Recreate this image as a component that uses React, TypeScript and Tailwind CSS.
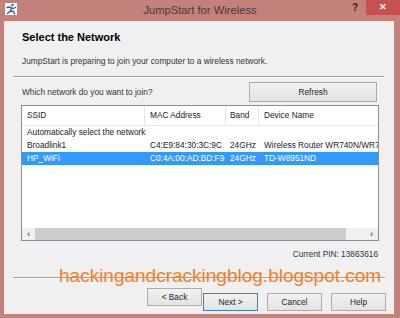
import React from "react";

const font = { fontFamily: '"Liberation Sans", Arial, sans-serif' };

function AppIcon() {
    return (
        <svg width="12" height="12" viewBox="0 0 12 12">
            <rect width="12" height="12" fill="#ffffff" />
            <circle cx="7.5" cy="2" r="1.2" fill="#1f5fbf" />
            <path d="M2 4.5 L5 4 L8 5.5 L10.5 4.5 M6.5 4.5 L5.5 8 L2.5 10.5 M5.5 8 L8.5 8.5 L9.5 11" stroke="#1f5fbf" strokeWidth="1.3" fill="none" strokeLinecap="round" strokeLinejoin="round" />
        </svg>
    );
}

function Button({ label, focused }: { label: string; focused?: boolean }) {
    return (
        <button
            className={
                focused
                    ? "w-[55px] h-[18px] border border-[#3c7fb1] bg-gradient-to-b from-[#f2f2f2] to-[#e3e3e3] text-[8.3px] text-[#222]"
                    : "w-[55px] h-[18px] border border-[#acacac] bg-gradient-to-b from-[#f2f2f2] to-[#e3e3e3] text-[8.3px] text-[#222]"
            }
        >
            {label}
        </button>
    );
}

export default function App() {
    const rows = [
        { ssid: "Broadlink1", mac: "C4:E9:84:30:3C:9C", band: "24GHz", name: "Wireless Router WR740N/WR74" },
        { ssid: "HP_WiFi", mac: "C0:4A:00:AD:BD:F9", band: "24GHz", name: "TD-W8951ND", selected: true },
    ];

    return (
        <div className="relative w-[400px] h-[318px] bg-[#c3817a] flex flex-col overflow-hidden" style={font}>
            {/* Title bar */}
            <div className="h-[21px] flex items-start relative">
                <div className="mt-[3px] ml-[5px]">
                    <AppIcon />
                </div>
                <div className="absolute left-0 right-0 top-[3px] text-center text-[11.2px] text-[#3d3d3d] leading-[14px]">
                    JumpStart for Wireless
                </div>
                <div className="ml-auto flex items-start">
                    <span className="mt-[2px] mr-[8px] text-[10px] font-bold text-[#2b2b2b] leading-[12px]">?</span>
                    <div className="w-[34px] h-[15px] bg-[#c75050] flex items-center justify-center text-white text-[9px] font-bold leading-none">
                        ✕
                    </div>
                </div>
            </div>

            {/* Content */}
            <div className="ml-[4px] mr-[6px] mb-[4px] flex-1 bg-[#f0f0f0] flex flex-col text-[#1e1e1e]">
                <div className="pl-[18px] pt-[9px] text-[11px] font-bold leading-[14px] text-black">Select the Network</div>
                <div className="pl-[18px] mt-[11px] text-[8.3px] leading-[12px] text-[#333]">
                    JumpStart is preparing to join your computer to a wireless network.
                </div>
                <div className="ml-[9px] mr-[10px] mt-[9px] border-t border-[#a0a0a0] border-b border-b-white" />

                <div className="mt-[4px] pl-[18px] pr-[17px] flex items-center justify-between">
                    <span className="text-[8.3px] text-[#333]">Which network do you want to join?</span>
                    <button className="w-[128px] h-[20px] border border-[#acacac] bg-gradient-to-b from-[#f2f2f2] to-[#e3e3e3] text-[8.3px] text-[#222]">
                        Refresh
                    </button>
                </div>

                {/* List */}
                <div className="mt-[3px] ml-[17px] w-[358px] h-[136px] border border-[#8a8f97] bg-white flex flex-col overflow-hidden text-[8.3px]">
                    <div className="h-[20px] flex border-b border-[#e3ecf5] text-[#222] shrink-0">
                        <div className="w-[123px] pl-[5px] flex items-center border-r border-[#e5e5e5]">SSID</div>
                        <div className="w-[81px] pl-[5px] flex items-center border-r border-[#e5e5e5]">MAC Address</div>
                        <div className="w-[33px] pl-[4px] flex items-center border-r border-[#e5e5e5]">Band</div>
                        <div className="flex-1 pl-[5px] flex items-center">Device Name</div>
                    </div>
                    <div className="h-[13px] pl-[5px] flex items-center text-[#222] shrink-0">Automatically select the network</div>
                    {rows.map((r) => (
                        <div
                            key={r.ssid}
                            className={
                                r.selected
                                    ? "h-[13px] flex items-center bg-[#3399ff] text-white shrink-0 whitespace-nowrap"
                                    : "h-[13px] flex items-center text-[#222] shrink-0 whitespace-nowrap"
                            }
                        >
                            <div className="w-[123px] pl-[5px] shrink-0">{r.ssid}</div>
                            <div className="w-[81px] pl-[5px] shrink-0">{r.mac}</div>
                            <div className="w-[33px] pl-[4px] shrink-0">{r.band}</div>
                            <div className="flex-1 pl-[5px]">{r.name}</div>
                        </div>
                    ))}
                    <div className="flex-1" />
                    {/* Horizontal scrollbar */}
                    <div className="h-[12px] flex bg-[#f0f0f0] shrink-0">
                        <div className="w-[13px] flex items-center justify-center text-[9px] font-bold text-[#606060] leading-none">‹</div>
                        <div className="w-[311px] bg-[#cdcdcd]" />
                        <div className="flex-1" />
                        <div className="w-[13px] flex items-center justify-center text-[9px] font-bold text-[#606060] leading-none">›</div>
                    </div>
                </div>

                <div className="mt-[7px] pr-[16px] text-right text-[8.3px] leading-[12px] text-[#333]">Current PIN: 13863616</div>

                <div className="ml-[9px] mr-[9px] mt-[17px] border-t border-[#a0a0a0] border-b border-b-white" />

                <div className="mt-[9px] pl-[143px] flex">
                    <Button label="< Back" />
                    <div className="ml-[1px]">
                        <Button label="Next >" focused />
                    </div>
                    <div className="ml-[9px]">
                        <Button label="Cancel" />
                    </div>
                    <div className="ml-[9px]">
                        <Button label="Help" />
                    </div>
                </div>
            </div>

            {/* Watermark overlay */}
            <div className="absolute left-[59px] top-[266px] text-[19px] leading-none text-[#ff7b1c] whitespace-nowrap">
                hackingandcrackingblog.blogspot.com
            </div>
        </div>
    );
}
